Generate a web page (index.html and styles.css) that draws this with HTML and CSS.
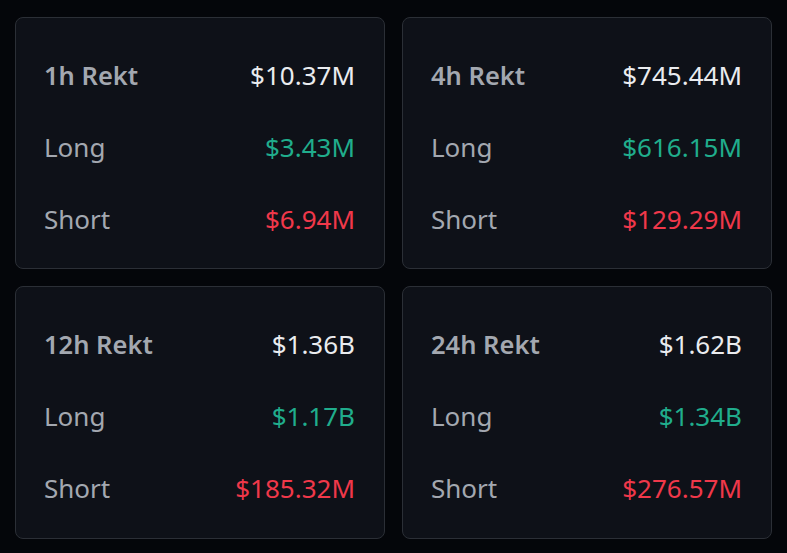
FILE: index.html
```html
<!DOCTYPE html>
<html>
<head>
<meta charset="utf-8">
<link rel="stylesheet" href="styles.css">
</head>
<body>
<div class="grid">
  <div class="card">
    <div class="row"><span class="title">1h Rekt</span><span class="val">$10.37M</span></div>
    <div class="row"><span class="label">Long</span><span class="val up">$3.43M</span></div>
    <div class="row"><span class="label">Short</span><span class="val down">$6.94M</span></div>
  </div>
  <div class="card">
    <div class="row"><span class="title">4h Rekt</span><span class="val">$745.44M</span></div>
    <div class="row"><span class="label">Long</span><span class="val up">$616.15M</span></div>
    <div class="row"><span class="label">Short</span><span class="val down">$129.29M</span></div>
  </div>
  <div class="card">
    <div class="row"><span class="title">12h Rekt</span><span class="val">$1.36B</span></div>
    <div class="row"><span class="label">Long</span><span class="val up">$1.17B</span></div>
    <div class="row"><span class="label">Short</span><span class="val down">$185.32M</span></div>
  </div>
  <div class="card">
    <div class="row"><span class="title">24h Rekt</span><span class="val">$1.62B</span></div>
    <div class="row"><span class="label">Long</span><span class="val up">$1.34B</span></div>
    <div class="row"><span class="label">Short</span><span class="val down">$276.57M</span></div>
  </div>
</div>
</body>
</html>
```
FILE: styles.css
```css
html, body {
  margin: 0;
  padding: 0;
  background: #04060a;
}
body {
  font-family: "Noto Sans", Inter, sans-serif;
}
.grid {
  display: grid;
  grid-template-columns: 370px 370px;
  grid-template-rows: 252px 253px;
  gap: 17px;
  padding: 17px 16px 15px 15px;
}
.card {
  box-sizing: border-box;
  background: #0e1118;
  border: 1px solid #2b2f36;
  border-radius: 8px;
  padding: 21px 29px 11px 28px;
  display: flex;
  flex-direction: column;
}
.row {
  height: 72px;
  display: flex;
  align-items: center;
  justify-content: space-between;
  font-size: 26px;
}
.title {
  color: #a3a8b0;
  font-weight: 600;
  font-size: 25.5px;
}
.label {
  color: #a3a8b0;
  font-weight: 400;
}
.val {
  color: #eaecef;
  font-weight: 400;
}
.val.up { color: #20ad8c; }
.val.down { color: #f0384a; }
```
